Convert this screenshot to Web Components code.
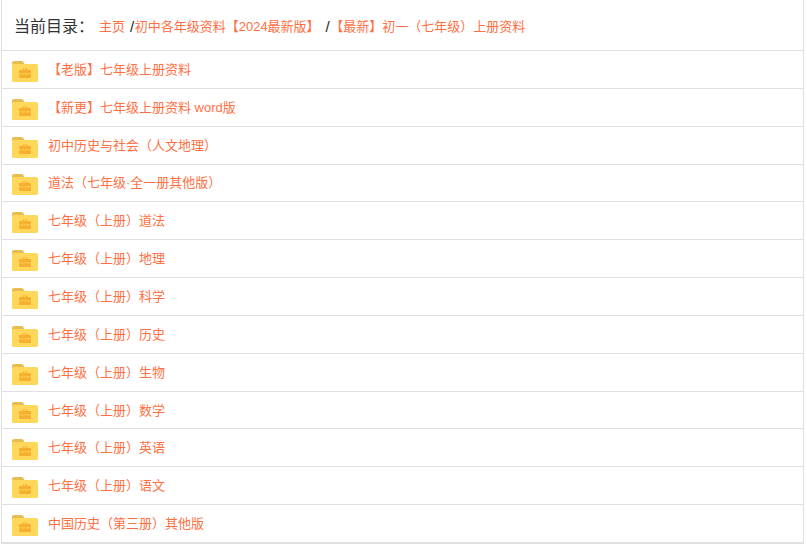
<!DOCTYPE html>
<html lang="zh">
<head>
<meta charset="utf-8">
<style>
  html, body { margin: 0; padding: 0; background: #fff; }
  body { font-family: "Liberation Sans", "Noto Sans CJK SC", sans-serif; }
</style>
</head>
<body>
<dir-panel>
  <dir-crumbs slot="head">
    <a>主页</a>
    <a>初中各年级资料【2024最新版】</a>
    <a>【最新】初一（七年级）上册资料</a>
  </dir-crumbs>
  <dir-row>【老版】七年级上册资料</dir-row>
  <dir-row>【新更】七年级上册资料 word版</dir-row>
  <dir-row>初中历史与社会（人文地理）</dir-row>
  <dir-row>道法（七年级·全一册其他版）</dir-row>
  <dir-row>七年级（上册）道法</dir-row>
  <dir-row>七年级（上册）地理</dir-row>
  <dir-row>七年级（上册）科学</dir-row>
  <dir-row>七年级（上册）历史</dir-row>
  <dir-row>七年级（上册）生物</dir-row>
  <dir-row>七年级（上册）数学</dir-row>
  <dir-row>七年级（上册）英语</dir-row>
  <dir-row>七年级（上册）语文</dir-row>
  <dir-row>中国历史（第三册）其他版</dir-row>
</dir-panel>
<script>
class DirPanel extends HTMLElement {
  constructor() {
    super()
    this.attachShadow({ mode: 'open' })
    this.shadowRoot.innerHTML = `
      <style>
        :host {
          display: block;
          box-sizing: border-box;
          width: 803px;
          margin-left: 1px;
          background: #fff;
          border: 1px solid #e0e0e0;
          border-top: 0;
          border-bottom-width: 2px;
        }
      </style>
      <slot name="head"></slot>
      <slot></slot>
    `
  }
}

class DirCrumbs extends HTMLElement {
  constructor() {
    super()
    this.attachShadow({ mode: 'open' })
    this.shadowRoot.innerHTML = `
      <style>
        :host {
          display: flex;
          align-items: center;
          box-sizing: border-box;
          height: 50px;
          padding: 1px 0 0 12px;
          color: #333;
          white-space: nowrap;
        }
        .label { font-size: 16px; width: 85px; flex: none; padding-bottom: 2px; }
        .trail { font-size: 13px; display: flex; align-items: center; }
        ::slotted(a) { color: #ff7043; }
        ::slotted(span) { color: #222; font-size: 15px; line-height: 1; padding-top: 1px; }
      </style>
      <span class="label">当前目录：</span>
      <span class="trail">
        <slot></slot>
      </span>
    `
  }

  connectedCallback() {
    // put the slashes between the links
    const links = [...this.querySelectorAll('a')]
    links.slice(1).forEach((link, i) => {
      const sep = document.createElement('span')
      sep.textContent = '/'
      sep.style.paddingLeft = i ? '6px' : '5px'
      sep.style.marginRight = '0.5px'
      link.before(sep)
    })
  }
}

class DirRow extends HTMLElement {
  constructor() {
    super()
    this.attachShadow({ mode: 'open' })
    this.shadowRoot.innerHTML = `
      <style>
        :host {
          display: flex;
          align-items: center;
          gap: 10px;
          box-sizing: border-box;
          height: 37.85px;
          padding-left: 10px;
          border-top: 1px solid #e0e0e0;
          color: #ff7043;
          font-size: 13px;
          white-space: nowrap;
        }
        svg { width: 26px; height: 21px; flex: none; margin-top: 4px; }
        span { padding-bottom: 2px; }
      </style>
      <svg viewBox="0 0 26 21" aria-hidden="true">
        <path d="M0 2a2 2 0 0 1 2-2h7a3 3 0 0 1 3 3v1h-12z" fill="#e8bd50"/>
        <rect x="0" y="3" width="26" height="18" rx="1.5" fill="#ffd75a"/>
        <path d="M7 10a1 1 0 0 1 1-1h2.5V7.5h5V9H18a1 1 0 0 1 1 1v2.6H7z" fill="#f4b02e"/>
        <path d="M11.5 8.3h3V9h-3z" fill="#ffd75a"/>
        <path d="M7 13.2h12V16a1 1 0 0 1-1 1H8a1 1 0 0 1-1-1z" fill="#f4b02e"/>
      </svg>
      <span><slot></slot></span>
    `
  }
}

customElements.define('dir-panel', DirPanel)
customElements.define('dir-crumbs', DirCrumbs)
customElements.define('dir-row', DirRow)
</script>
</body>
</html>
